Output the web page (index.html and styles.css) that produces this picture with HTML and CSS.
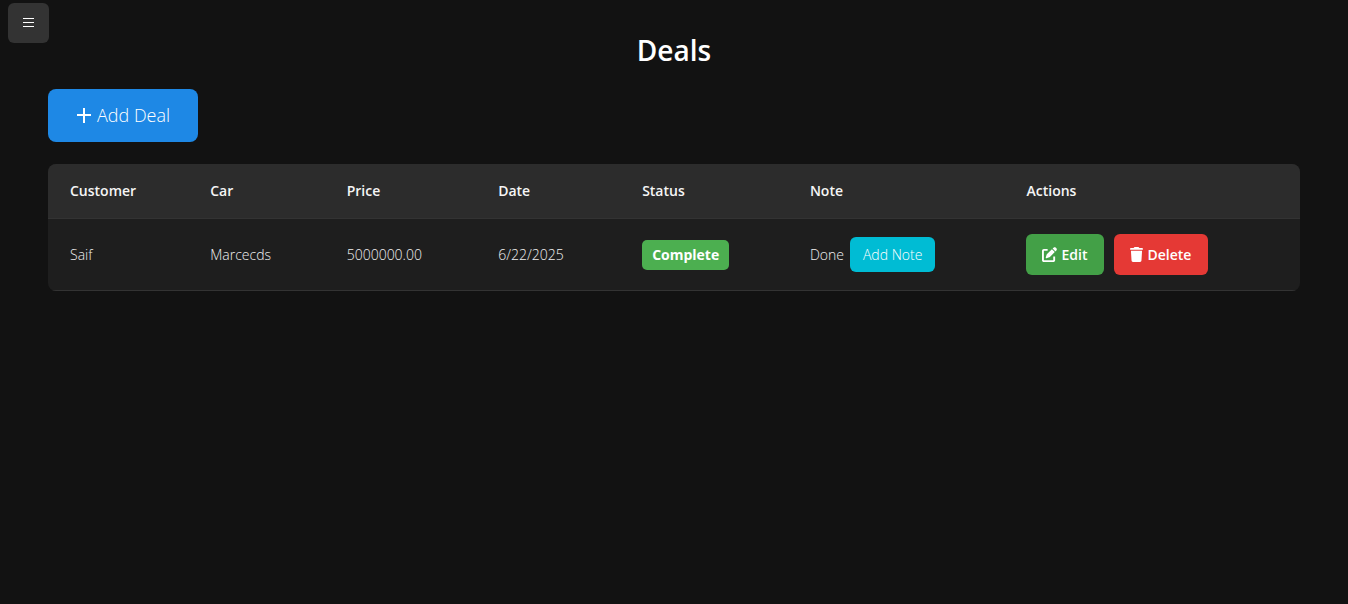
FILE: index.html
```html
<!DOCTYPE html>
<html lang="en">
<head>
<meta charset="utf-8">
<meta name="viewport" content="width=device-width, initial-scale=1">
<title>Deals</title>
<link rel="stylesheet" href="styles.css">
</head>
<body>
<button class="menu-toggle" type="button" aria-label="Open menu">
  <svg width="12" height="10" viewBox="0 0 12 10" aria-hidden="true"><path d="M0 .5h11M0 4.5h11M0 8.5h11" stroke="currentColor" fill="none"/></svg>
</button>
<main class="page">
  <h1 class="title">Deals</h1>
  <button class="button add-deal" type="button">
    <svg width="15" height="15" viewBox="0 0 15 15" aria-hidden="true"><path d="M8 0v15M1 7h14" stroke="currentColor" stroke-width="2" fill="none"/></svg>
    Add Deal
  </button>
  <table class="deals">
    <colgroup>
      <col class="col-customer"><col class="col-car"><col class="col-price"><col class="col-date"><col class="col-status"><col class="col-note"><col>
    </colgroup>
    <thead>
      <tr><th>Customer</th><th>Car</th><th>Price</th><th>Date</th><th>Status</th><th>Note</th><th>Actions</th></tr>
    </thead>
    <tbody>
      <tr>
        <td>Saif</td>
        <td>Marcecds</td>
        <td>5000000.00</td>
        <td>6/22/2025</td>
        <td><div class="status"><span class="badge">Complete</span></div></td>
        <td><div class="note">Done <button class="button add-note" type="button">Add Note</button></div></td>
        <td>
          <div class="actions">
            <button class="button action edit" type="button">
              <svg width="15" height="15" viewBox="0 0 512 512" aria-hidden="true"><path fill="currentColor" d="M472 22c-22-22-57-22-79 0l-30 30 98 98 30-30c22-22 22-57 0-79zM172 242c-6 6-11 14-14 22l-29 89c-3 9-1 18 5 24s15 9 24 6l89-30c8-3 16-7 22-13l168-168-98-98zM64 64C28 64 0 92 0 128v320c0 36 28 64 64 64h320c36 0 64-28 64-64V320h-64v128H64V128h128V64z"/></svg>
              Edit
            </button>
            <button class="button action delete" type="button">
              <svg width="13" height="15" viewBox="0 0 448 512" aria-hidden="true"><path fill="currentColor" d="M135 18 128 32H32C14 32 0 46 0 64s14 32 32 32h384c18 0 32-14 32-32s-14-32-32-32h-96l-7-14C307 7 296 0 284 0H164c-12 0-23 7-29 18zM416 128H32l21 339c2 25 23 45 48 45h246c25 0 46-20 48-45z"/></svg>
              Delete
            </button>
          </div>
        </td>
      </tr>
    </tbody>
  </table>
</main>
</body>
</html>
```
FILE: styles.css
```css
* {
  box-sizing: border-box;
}

body {
  margin: 0;
  background: #121212;
  color: #f0f0f0;
  font: 14px/20px "Segoe UI", "Open Sans", "Noto Sans", sans-serif;
  font-weight: 300;
}

svg {
  flex: none;
}

.menu-toggle {
  position: absolute;
  top: 3px;
  left: 8px;
  display: flex;
  align-items: center;
  justify-content: center;
  width: 41px;
  height: 40px;
  padding: 0;
  border: 0;
  border-radius: 6px;
  background: #333;
  color: #fff;
}

.page {
  padding: 30px 48px;
}

.title {
  margin: 0 0 19px;
  color: #fff;
  font-size: 28px;
  font-weight: 600;
  line-height: 40px;
  text-align: center;
}

.button {
  display: inline-flex;
  align-items: center;
  justify-content: center;
  gap: 4px;
  border: 0;
  border-radius: 6px;
  color: #fff;
  font: inherit;
  white-space: nowrap;
  cursor: pointer;
}

.add-deal {
  display: flex;
  gap: 6px;
  margin-bottom: 22px;
  padding: 14px 28px;
  border-radius: 8px;
  background: #1e88e5;
  font-size: 18px;
  line-height: 25px;
}

.deals {
  width: 100%;
  table-layout: fixed;
  border-spacing: 0;
  overflow: hidden;
  border-radius: 8px;
  background: #1e1e1e;
}

.col-customer { width: 11.2%; }
.col-car { width: 10.9%; }
.col-price { width: 12.1%; }
.col-date { width: 11.5%; }
.col-status { width: 13.4%; }
.col-note { width: 17.3%; }

.deals th,
.deals td {
  padding: 15px 22px;
  border-bottom: 1px solid #333;
  text-align: left;
  vertical-align: middle;
}

.deals th {
  padding: 17px 22px;
  background: #2c2c2c;
  color: #f5f5f5;
  font-weight: 600;
}

.status {
  display: flex;
}

.badge {
  padding: 5px 10px;
  border-radius: 5px;
  background: #4caf50;
  color: #fff;
  font-weight: 700;
}

.note {
  display: flex;
  align-items: center;
  gap: 6px;
}

.add-note {
  padding: 8px 13px;
  background: #00bcd4;
  line-height: 19px;
}

.actions {
  display: flex;
  gap: 10px;
}

.action {
  padding: 10px 17px 10px 16px;
  font-weight: 600;
  line-height: 21px;
}

.edit {
  background: #43a047;
}

.delete {
  background: #e53935;
}
```
